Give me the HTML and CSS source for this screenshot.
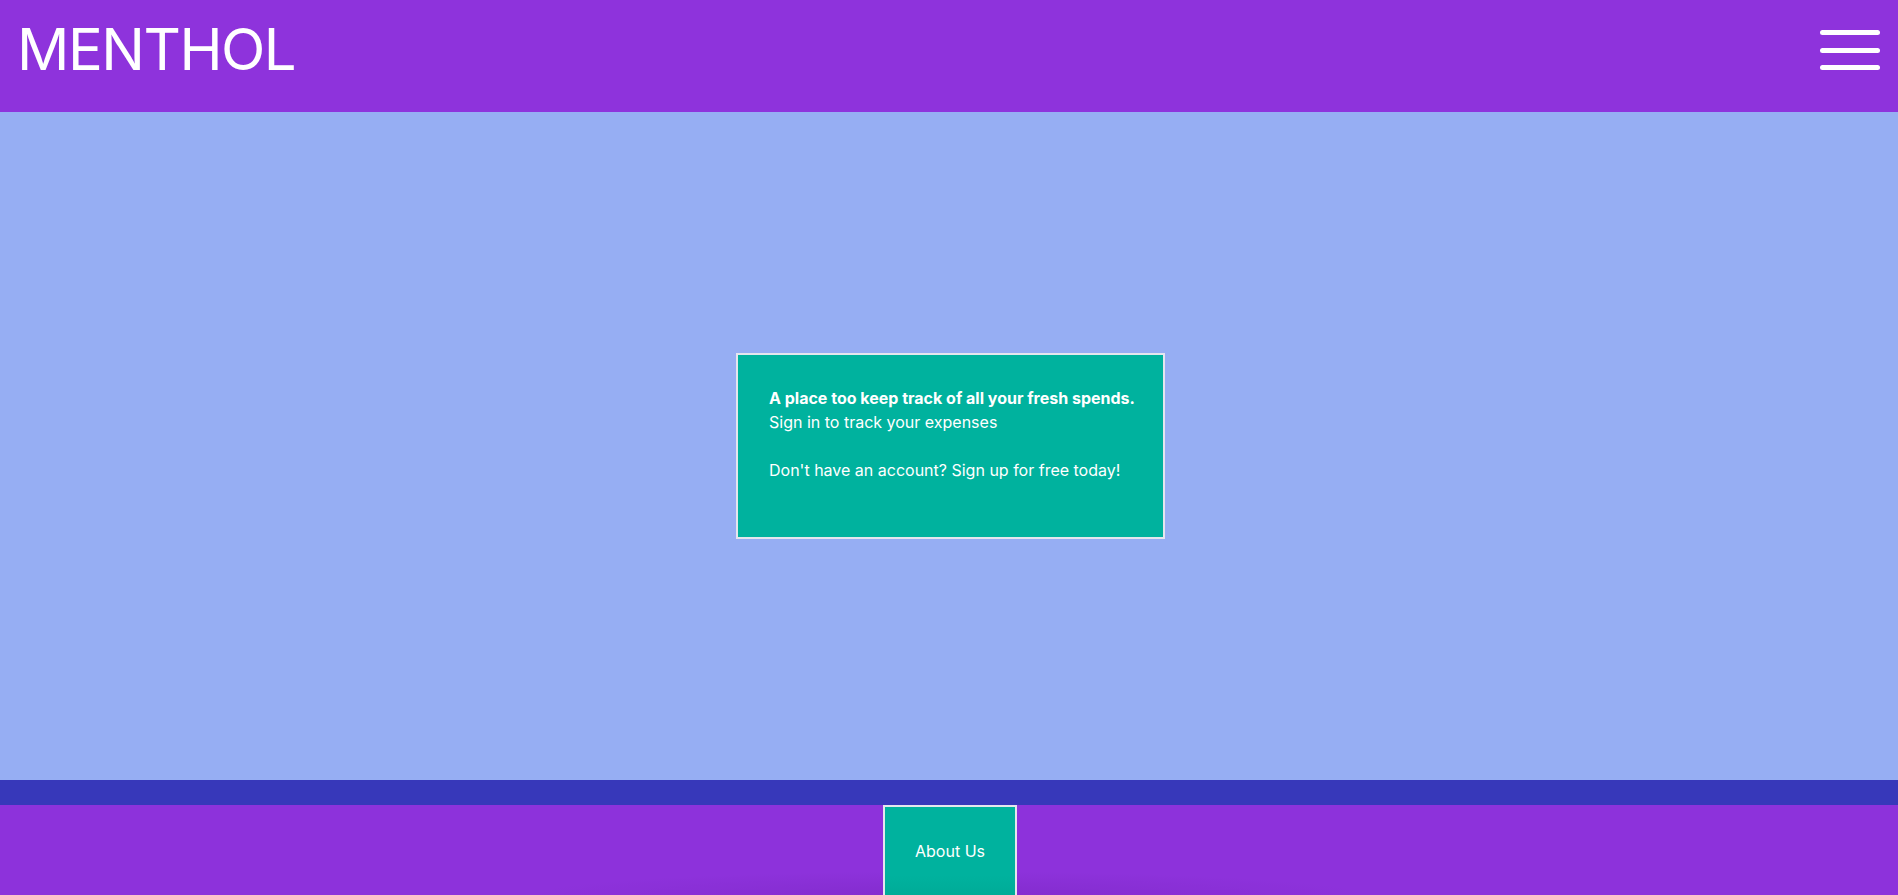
FILE: index.html
```html
<!DOCTYPE html>
<html lang="en">
<head>
<meta charset="utf-8">
<title>Menthol</title>
<link rel="stylesheet" href="styles.css">
</head>
<body>
  <header class="topbar">
    <h1 class="brand">MENTHOL</h1>
    <button class="menu" aria-label="Menu">
      <span class="bar"></span>
      <span class="bar"></span>
      <span class="bar"></span>
    </button>
  </header>
  <main class="hero">
    <section class="card">
      <p class="lead"><strong>A place too keep track of all your fresh spends.</strong><br>Sign in to track your expenses</p>
      <p class="cta">Don't have an account? Sign up for free today!</p>
    </section>
  </main>
  <div class="band"></div>
  <footer class="footer">
    <a class="about" href="#">About Us</a>
  </footer>
</body>
</html>
```
FILE: styles.css
```css
* { box-sizing: border-box; }
html, body { margin: 0; padding: 0; }
body {
  font-family: Inter, "Noto Sans", "Liberation Sans", sans-serif;
  color: #fff;
  background: #8d32db;
}
.topbar {
  height: 112px;
  background: #8e33dc;
  display: flex;
  align-items: flex-start;
  justify-content: space-between;
  padding: 0 18px 0 17px;
}
.brand {
  margin: 14px 0 0 0;
  font-weight: 400;
  font-size: 58px;
  line-height: 70px;
  letter-spacing: -1.5px;
}
.menu {
  margin-top: 30px;
  width: 60px;
  height: 40px;
  padding: 0;
  border: 0;
  background: none;
  display: flex;
  flex-direction: column;
  justify-content: space-between;
}
.bar {
  display: block;
  width: 60px;
  height: 5px;
  border-radius: 3px;
  background: #fff;
}
.hero {
  height: 668px;
  background: #96aef3;
  display: flex;
  align-items: center;
  justify-content: center;
}
.card {
  width: 429px;
  height: 186px;
  margin-left: 3px;
  background: #00b29e;
  border: 2px solid #e4e6ee;
  padding: 31px 14px 0 31px;
  font-size: 16px;
  line-height: 24px;
}
.card p { margin: 0; }
.lead { margin-bottom: 24px !important; }
.band {
  height: 25px;
  background: #3738ba;
}
.footer {
  height: 90px;
  display: flex;
  justify-content: center;
  background:
    radial-gradient(ellipse 420px 24px at 50% 100%, rgba(60,0,110,0.12), rgba(60,0,110,0) 100%),
    #8d32db;
}
.about {
  width: 134px;
  height: 100px;
  margin-left: 2px;
  background: linear-gradient(#00b29e 70%, #00a894);
  border: 2px solid #e4e6ee;
  border-bottom: 0;
  color: #fff;
  text-decoration: none;
  font-size: 16px;
  display: flex;
  justify-content: center;
  padding-top: 34px;
}
```
